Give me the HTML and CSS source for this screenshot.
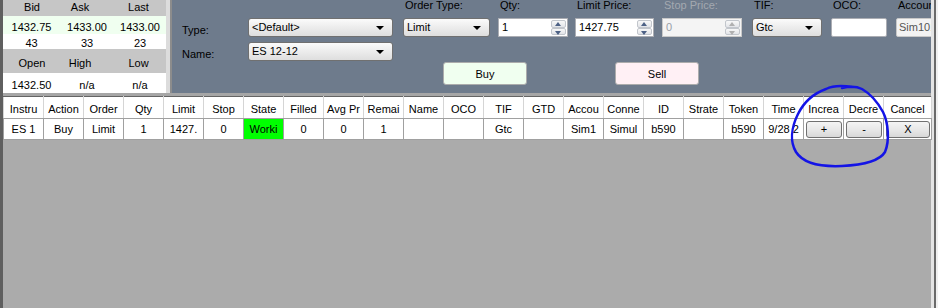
FILE: index.html
```html
<!DOCTYPE html>
<html>
<head>
	<meta charset="utf-8">
	<title>Order Entry</title>
	<link rel="stylesheet" href="styles.css">
</head>
<body>
	<div class="app">
		<div class="main">
			<div class="top">
				<div class="quote">
					<div class="q-head"><span>Bid</span><span>Ask</span><span>Last</span></div>
					<div class="q-row q-green"><span>1432.75</span><span>1433.00</span><span>1433.00</span></div>
					<div class="q-row q-size"><span>43</span><span>33</span><span>23</span></div>
					<div class="q-head q-head2"><span>Open</span><span>High</span><span>Low</span></div>
					<div class="q-row q-last"><span>1432.50</span><span>n/a</span><span>n/a</span></div>
				</div>
				<div class="splitter"></div>
				<div class="controls">
					<div class="left-form">
						<div class="lf-row lf-type">
							<label>Type:</label>
							<div class="combo wide"><span>&lt;Default&gt;</span><i class="arrow"></i></div>
						</div>
						<div class="lf-row lf-name">
							<label>Name:</label>
							<div class="combo wide"><span>ES 12-12</span><i class="arrow"></i></div>
						</div>
					</div>
					<div class="order-col">
						<div class="fields">
							<div class="field f-otype">
								<label>Order Type:</label>
								<div class="combo"><span>Limit</span><i class="arrow"></i></div>
							</div>
							<div class="field f-qty">
								<label>Qty:</label>
								<div class="num"><span class="val">1</span><div class="spin"><b class="up"></b><b class="down"></b></div></div>
							</div>
							<div class="field f-limit">
								<label>Limit Price:</label>
								<div class="num"><span class="val">1427.75</span><div class="spin"><b class="up"></b><b class="down"></b></div></div>
							</div>
							<div class="field f-stop">
								<label class="disabled">Stop Price:</label>
								<div class="num off"><span class="val">0</span><div class="spin"><b class="up"></b><b class="down"></b></div></div>
							</div>
							<div class="field f-tif">
								<label>TIF:</label>
								<div class="combo"><span>Gtc</span><i class="arrow"></i></div>
							</div>
							<div class="field f-oco">
								<label>OCO:</label>
								<div class="text"></div>
							</div>
							<div class="field f-acct">
								<label>Account:</label>
								<div class="text ro">Sim101</div>
							</div>
						</div>
						<div class="actions">
							<button class="btn buy">Buy</button>
							<button class="btn sell">Sell</button>
						</div>
					</div>
				</div>
			</div>
			<div class="band"></div>
			<table class="orders">
				<colgroup>
					<col class="c"><col class="c"><col class="c"><col class="c"><col class="c"><col class="c">
					<col class="c"><col class="c"><col class="c"><col class="c"><col class="c"><col class="c">
					<col class="c"><col class="c"><col class="c"><col class="c"><col class="c"><col class="c">
					<col class="c"><col class="c"><col class="c"><col class="c"><col class="c-last">
				</colgroup>
				<tr>
					<th>Instru</th><th>Action</th><th>Order</th><th>Qty</th><th>Limit</th><th>Stop</th>
					<th>State</th><th>Filled</th><th>Avg Pr</th><th>Remai</th><th>Name</th><th>OCO</th>
					<th>TIF</th><th>GTD</th><th>Accou</th><th>Conne</th><th>ID</th><th>Strate</th>
					<th>Token</th><th>Time</th><th>Increa</th><th>Decre</th><th>Cancel</th>
				</tr>
				<tr>
					<td>ES 1</td><td>Buy</td><td>Limit</td><td>1</td><td>1427.</td><td>0</td>
					<td class="working">Worki</td><td>0</td><td>0</td><td>1</td><td></td><td></td>
					<td>Gtc</td><td></td><td>Sim1</td><td>Simul</td><td>b590</td><td></td>
					<td>b590</td><td>9/28 2</td>
					<td class="bcell"><button class="cell-btn">+</button></td>
					<td class="bcell"><button class="cell-btn">-</button></td>
					<td class="bcell"><button class="cell-btn">X</button></td>
				</tr>
			</table>
			<div class="empty"></div>
		</div>
		<div class="edge"></div>
	</div>

	<!-- pen mark drawn over the grid -->
	<svg class="annot" width="938" height="308" viewBox="0 0 938 308">
		<path d="M 852 87 C 840 85, 832 86, 826 89 C 812 94, 803 104, 798 114 C 791 128, 790 142, 796 152 C 803 163, 820 167, 842 166 C 862 165, 879 162, 885 152 C 890 140, 888 122, 883 112 C 877 101, 869 93, 862 89 C 858 87, 850 86, 842 88" fill="none" stroke="#1414e6" stroke-width="2.5" stroke-linecap="round"/>
	</svg>
</body>
</html>
```

FILE: styles.css
```css
body{
	margin: 0;
	width: 938px;
	height: 308px;
	overflow: hidden;
	position: relative;
	font: 11px/13px "Liberation Sans", Arial, sans-serif;
	color: #000;
	background-color: #f0f0f0;
}
.app{
	display: flex;
	height: 308px;
}
.main{
	width: 928px;
	border-left: 3px solid #5f5f5f;
	border-right: 3px solid #e4e4e4;
	display: flex;
	flex-direction: column;
	background-color: #ababab;
}
.edge{
	width: 2px;
	background-color: #6a6a6a;
}

/* top panel */
.top{
	display: flex;
	height: 93px;
	background-color: #6e7b8c;
}
.quote{
	width: 163px;
	background-color: #fff;
}
.q-head, .q-row{
	display: grid;
	text-align: center;
	line-height: 14px;
}
.q-head{
	grid-template-columns: 58px 50px 55px;
	height: 16px;
	background-color: #c6c6c6;
}
.q-head span:nth-child(2){
	padding-right: 12px;
}
.q-head2{
	height: 24px;
	padding-top: 7px;
	box-sizing: border-box;
}
.q-row{
	grid-template-columns: 57px 54px 52px;
	box-sizing: border-box;
}
.q-green{
	height: 18px;
	padding-top: 4px;
	background-color: #f0fff0;
}
.q-size{
	height: 15px;
	padding-top: 2px;
}
.q-last{
	height: 20px;
	padding-top: 5px;
}
.splitter{
	width: 2px;
	border-left: 4px solid #dcdcdc;
	background-color: #8c8c8c;
}
.controls{
	flex: 1;
	min-width: 0;
	display: flex;
	overflow: hidden;
}

/* Type / Name */
.left-form{
	padding: 18px 0 0 10px;
	width: 211px;
	flex: none;
}
.lf-row{
	display: flex;
	align-items: center;
	height: 19px;
}
.lf-name{
	margin-top: 5px;
}
.lf-row label{
	width: 66px;
	padding-top: 6px;
}

.combo{
	height: 19px;
	box-sizing: border-box;
	border: 1px solid #707070;
	border-radius: 3px;
	background: linear-gradient(#fbfbfb, #ececec 50%, #dedede);
	display: flex;
	align-items: center;
	justify-content: space-between;
	padding-left: 3px;
}
.combo.wide{
	width: 145px;
}
.arrow{
	width: 0;
	height: 0;
	border-top: 4px solid #000;
	border-left: 4px solid transparent;
	border-right: 4px solid transparent;
	margin-right: 8px;
}

/* order fields */
.order-col{
	margin-left: 10px;
	flex: none;
	width: 560px;
}
.fields{
	display: flex;
	margin-top: -1px;
}
.field{
	flex: none;
}
.field label{
	display: block;
	height: 19px;
	padding-left: 2px;
	white-space: nowrap;
}
.field label.disabled{
	color: #a4a9b0;
}
.f-otype{ width: 87px; margin-right: 8px; }
.f-qty{ width: 70px; margin-right: 7px; }
.f-limit{ width: 79px; margin-right: 8px; }
.f-stop{ width: 80px; margin-right: 10px; }
.f-tif{ width: 70px; margin-right: 9px; }
.f-oco{ width: 56px; margin-right: 9px; }
.f-acct{ width: 60px; }

.num{
	height: 19px;
	box-sizing: border-box;
	border: 1px solid #abadb3;
	background-color: #fff;
	display: flex;
}
.num .val{
	flex: 1;
	padding-left: 3px;
	line-height: 17px;
}
.spin{
	width: 15px;
	display: flex;
	flex-direction: column;
	justify-content: space-between;
	padding: 1px 1px 1px 0;
}
.spin b{
	height: 7px;
	border: 1px solid #c2c6cc;
	border-radius: 2px;
	background: linear-gradient(#f8f8f8, #e2e4e8);
	position: relative;
}
.spin b::after{
	content: "";
	position: absolute;
	left: 3px;
	top: 1px;
	border-left: 3.5px solid transparent;
	border-right: 3.5px solid transparent;
}
.spin .up::after{
	border-bottom: 4px solid #4d6185;
}
.spin .down::after{
	border-top: 4px solid #4d6185;
	top: 2px;
}
.num.off{
	background-color: #f4f4f4;
	border-color: #c9c9c9;
	color: #9aa0a8;
}
.num.off .spin b::after{
	border-bottom-color: #b0b0b0;
	border-top-color: #b0b0b0;
}
.text{
	height: 19px;
	box-sizing: border-box;
	border: 1px solid #abadb3;
	border-radius: 2px;
	background-color: #fff;
	padding-left: 2px;
	line-height: 17px;
	white-space: nowrap;
}
.text.ro{
	background-color: #f3f3f3;
	border-color: #c8c8c8;
	color: #555;
}

.actions{
	display: flex;
	margin-top: 25px;
}
.btn{
	width: 84px;
	height: 23px;
	border: 1px solid #acacac;
	border-radius: 3px;
	font: 11px "Liberation Sans", Arial, sans-serif;
	color: #000;
	padding: 0;
}
.buy{
	margin-left: 40px;
	background-color: #f0fff0;
}
.sell{
	margin-left: 88px;
	background-color: #fff0f5;
}

/* orders grid */
.band{
	height: 3px;
	background-color: #a6a6a6;
}
.orders{
	width: 928px;
	table-layout: fixed;
	border-collapse: collapse;
	background-color: #fff;
}
.orders col.c{
	width: 40px;
}
.orders col.c-last{
	width: 48px;
}
.orders th, .orders td{
	border: 1px solid #a0a0a0;
	padding: 0;
	text-align: center;
	white-space: nowrap;
	overflow: hidden;
	font-weight: normal;
}
.orders th{
	height: 22px;
	padding-top: 3px;
	box-sizing: border-box;
	border-color: #d5d5d5;
	border-top: 1px solid #646464;
	border-bottom-color: #a0a0a0;
}
.orders td{
	height: 21px;
	box-sizing: border-box;
	padding-top: 1px;
}
.orders td.working{
	background-color: #00ff00;
}
.orders td.bcell{
	padding: 2px 1px 1px 2px;
}
.cell-btn{
	display: block;
	width: 100%;
	height: 17px;
	border: 1px solid #707070;
	border-radius: 3px;
	background: linear-gradient(#f4f4f4, #e8e8e8 50%, #d8d8d8);
	font: 11px/13px "Liberation Sans", Arial, sans-serif;
	padding: 0;
	color: #000;
}
.empty{
	flex: 1;
}

.annot{
	position: absolute;
	left: 0;
	top: 0;
	pointer-events: none;
}
```
